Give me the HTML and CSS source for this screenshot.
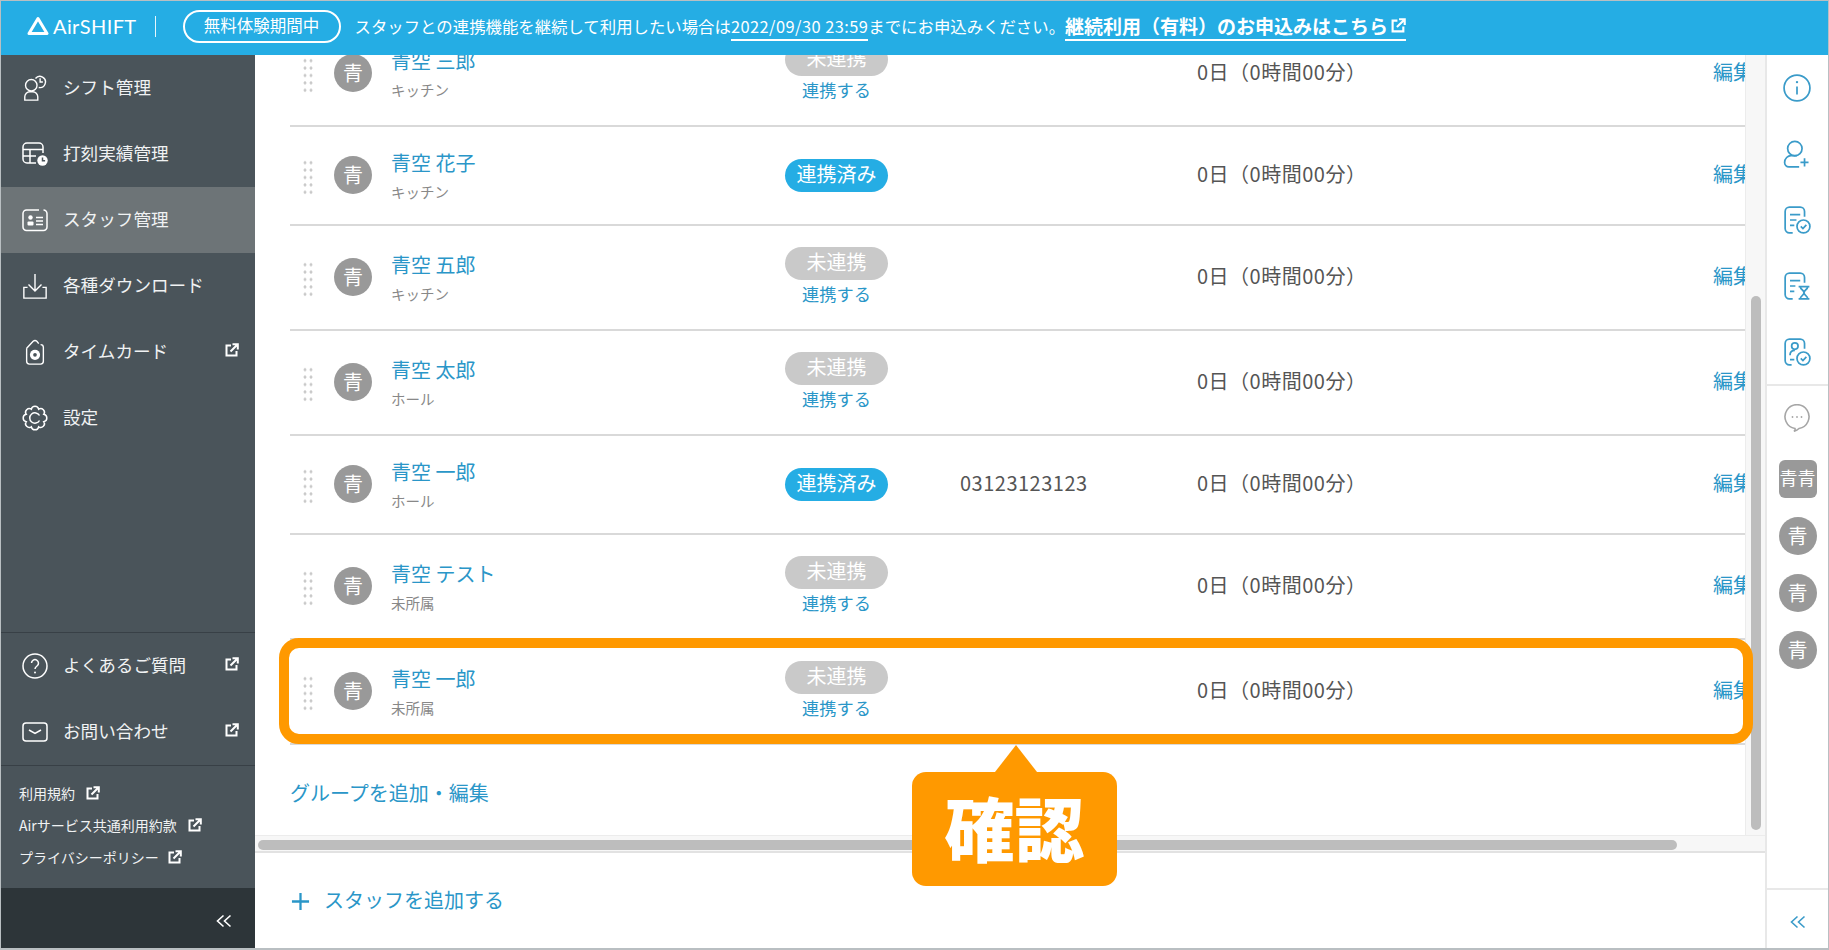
FILE: index.html
```html
<!DOCTYPE html>
<html lang="ja">
<head>
  <meta charset="UTF-8">
  <title>AirSHIFT スタッフ管理</title>
  <link rel="stylesheet" href="styles.css">
</head>
<body>
  <svg class="sprite" width="0" height="0">
    <symbol id="ext" viewBox="0 0 14 14">
      <path d="M6 2.5H1.5v10h10V8" fill="none" stroke="currentColor" stroke-width="2"/>
      <path d="M5.5 8.5L12 2M7.5 1.2h5.3v5.3" fill="none" stroke="currentColor" stroke-width="2"/>
    </symbol>
  </svg>

  <div class="frame">
    <header class="topbar">
      <div class="logo">
        <svg class="logo-mark" viewBox="0 0 22 20"><path d="M11 2.5L20 17.5H2Z" fill="none" stroke="#fff" stroke-width="3" stroke-linejoin="round"/></svg>
        <span class="logo-text">AirSHIFT</span>
      </div>
      <span class="topbar-sep"></span>
      <span class="trial-pill">無料体験期間中</span>
      <span class="notice">スタッフとの連携機能を継続して利用したい場合は<span class="notice-date">2022/09/30 23:59</span>までにお申込みください。</span>
      <a class="notice-link">継続利用（有料）のお申込みはこちら<svg class="ext-lg"><use href="#ext"/></svg></a>
    </header>

    <div class="body">
      <!-- 左メニュー -->
      <aside class="sidebar">
        <a class="nav-item">
          <svg class="nav-icon" viewBox="0 0 26 28"><circle cx="9" cy="11" r="6.2"/><path d="M2 27v-3.5a5.5 5.5 0 0 1 5.5-5.5h3a5.5 5.5 0 0 1 5.5 5.5V27Z"/><path d="M13.5 3.8a6 6 0 1 1 3.5 9.6M18.5 3.5v4h3"/></svg>
          <span>シフト管理</span>
        </a>
        <a class="nav-item">
          <svg class="nav-icon" viewBox="0 0 26 24"><path d="M14 21H5a4 4 0 0 1-4-4V5a4 4 0 0 1 4-4h12a4 4 0 0 1 4 4v6M1 7.5h20M1 14h13M8 7.5V21"/><circle cx="20.5" cy="18.5" r="5.2" fill="#fff" stroke="none"/><path d="M20.5 15.5v3.2h2.6" stroke="#4a545a"/></svg>
          <span>打刻実績管理</span>
        </a>
        <a class="nav-item active">
          <svg class="nav-icon" viewBox="0 0 26 24"><path d="M17 2H4.5A3.5 3.5 0 0 0 1 5.5V19a3.5 3.5 0 0 0 3.5 3.5h17A3.5 3.5 0 0 0 25 19V5.5A3.5 3.5 0 0 0 21.5 2"/><path d="M14 9.5h7M14 13h7M14 16.5h7"/><circle cx="8.5" cy="9.5" r="2.2" fill="#fff" stroke="none"/><rect x="5.5" y="13.5" width="6" height="4" rx="1" fill="#fff" stroke="none"/></svg>
          <span>スタッフ管理</span>
        </a>
        <a class="nav-item">
          <svg class="nav-icon" viewBox="0 0 26 28"><path d="M13 1v18M6 12.5l7 7 7-7M5 15.5H1v11.500h24V15.5h-4"/></svg>
          <span>各種ダウンロード</span>
        </a>
        <a class="nav-item">
          <svg class="nav-icon" viewBox="0 0 26 28"><path d="M4 10L11 2.5a3 3 0 0 1 4 0l2 2.5M4 10v14a3 3 0 0 0 3 3h12a3 3 0 0 0 3-3V9a3 3 0 0 0-3-3"/><circle cx="13" cy="17" r="5.5" fill="#fff" stroke="none"/><circle cx="13" cy="17" r="2" fill="#4a545a" stroke="none"/></svg>
          <span>タイムカード</span>
          <svg class="ext"><use href="#ext"/></svg>
        </a>
        <a class="nav-item">
          <svg class="nav-icon" viewBox="0 0 26 26"><path d="M21.78 9.36A3.7 3.7 0 0 1 21.78 16.64A3.7 3.7 0 0 1 16.64 21.78A3.7 3.7 0 0 1 9.36 21.78A3.7 3.7 0 0 1 4.22 16.64A3.7 3.7 0 0 1 4.22 9.36A3.7 3.7 0 0 1 9.36 4.22A3.7 3.7 0 0 1 16.64 4.22A3.7 3.7 0 0 1 21.78 9.36Z"/><path d="M17.5 10.5a5.2 5.2 0 1 0 0 5"/></svg>
          <span>設定</span>
        </a>

        <div class="sidebar-spacer"></div>

        <div class="sidebar-help">
          <a class="nav-item">
            <svg class="nav-icon" viewBox="0 0 26 26"><circle cx="13" cy="13" r="12"/><path d="M9.5 10a3.5 3.5 0 1 1 5.5 3c-1.3.9-2 1.6-2 3"/><circle cx="13" cy="19.5" r="1" fill="#fff" stroke="none"/></svg>
            <span>よくあるご質問</span>
            <svg class="ext"><use href="#ext"/></svg>
          </a>
          <a class="nav-item">
            <svg class="nav-icon" viewBox="0 0 26 20"><rect x="1" y="1" width="24" height="18" rx="3"/><path d="M7 8l6 3.5 6-3.5"/></svg>
            <span>お問い合わせ</span>
            <svg class="ext"><use href="#ext"/></svg>
          </a>
        </div>

        <div class="sidebar-links">
          <a class="small-link">利用規約<svg class="ext"><use href="#ext"/></svg></a>
          <a class="small-link">Airサービス共通利用約款<svg class="ext"><use href="#ext"/></svg></a>
          <a class="small-link tight">プライバシーポリシー<svg class="ext"><use href="#ext"/></svg></a>
        </div>

        <div class="sidebar-collapse">
          <svg class="chevrons" viewBox="0 0 16 14"><path d="M7.5 1.5L1.5 7l6 5.5M14.5 1.5L8.5 7l6 5.5"/></svg>
        </div>
      </aside>

      <!-- スタッフ一覧 -->
      <main class="main">
        <div class="scroll-area">
          <div class="content">
            <div class="staff-list">
              <div class="staff-row">
                <span class="handle"></span><span class="avatar">青</span>
                <div class="staff-name"><a class="name-link">青空 三郎</a><span class="group">キッチン</span></div>
                <div class="status"><span class="badge off">未連携</span><a class="connect">連携する</a></div>
                <div class="phone"></div><div class="worktime">0日（0時間00分）</div><a class="edit">編集</a>
              </div>
              <div class="staff-row">
                <span class="handle"></span><span class="avatar">青</span>
                <div class="staff-name"><a class="name-link">青空 花子</a><span class="group">キッチン</span></div>
                <div class="status"><span class="badge on">連携済み</span></div>
                <div class="phone"></div><div class="worktime">0日（0時間00分）</div><a class="edit">編集</a>
              </div>
              <div class="staff-row">
                <span class="handle"></span><span class="avatar">青</span>
                <div class="staff-name"><a class="name-link">青空 五郎</a><span class="group">キッチン</span></div>
                <div class="status"><span class="badge off">未連携</span><a class="connect">連携する</a></div>
                <div class="phone"></div><div class="worktime">0日（0時間00分）</div><a class="edit">編集</a>
              </div>
              <div class="staff-row">
                <span class="handle"></span><span class="avatar">青</span>
                <div class="staff-name"><a class="name-link">青空 太郎</a><span class="group">ホール</span></div>
                <div class="status"><span class="badge off">未連携</span><a class="connect">連携する</a></div>
                <div class="phone"></div><div class="worktime">0日（0時間00分）</div><a class="edit">編集</a>
              </div>
              <div class="staff-row">
                <span class="handle"></span><span class="avatar">青</span>
                <div class="staff-name"><a class="name-link">青空 一郎</a><span class="group">ホール</span></div>
                <div class="status"><span class="badge on">連携済み</span></div>
                <div class="phone">03123123123</div><div class="worktime">0日（0時間00分）</div><a class="edit">編集</a>
              </div>
              <div class="staff-row">
                <span class="handle"></span><span class="avatar">青</span>
                <div class="staff-name"><a class="name-link">青空 テスト</a><span class="group">未所属</span></div>
                <div class="status"><span class="badge off">未連携</span><a class="connect">連携する</a></div>
                <div class="phone"></div><div class="worktime">0日（0時間00分）</div><a class="edit">編集</a>
              </div>
              <div class="staff-row">
                <span class="handle"></span><span class="avatar">青</span>
                <div class="staff-name"><a class="name-link">青空 一郎</a><span class="group">未所属</span></div>
                <div class="status"><span class="badge off">未連携</span><a class="connect">連携する</a></div>
                <div class="phone"></div><div class="worktime">0日（0時間00分）</div><a class="edit">編集</a>
              </div>
            </div>
            <a class="group-link">グループを追加・編集</a>
          </div>
          <div class="v-track"><div class="v-thumb"></div></div>
        </div>
        <div class="h-track"><div class="h-thumb"></div></div>
        <div class="main-footer">
          <a class="add-staff">
            <svg class="plus" viewBox="0 0 20 20"><path d="M10 1v18M1 10h18"/></svg>
            スタッフを追加する
          </a>
        </div>
      </main>

      <!-- 右パネル -->
      <aside class="rightbar">
        <div class="tools">
          <a class="tool"><svg viewBox="0 0 26 26"><circle cx="13" cy="13" r="12"/><path d="M13 11.5v7.5"/><circle cx="13" cy="7.5" r="1.1" fill="currentColor" stroke="none"/></svg></a>
          <a class="tool"><svg viewBox="0 0 26 26"><circle cx="11" cy="8" r="6.7"/><path d="M15 25H5.5A4 4 0 0 1 1.5 21c0-4 3-6.5 6-6.5h5.5M20 17v7.5M16.2 20.7h7.5"/></svg></a>
          <a class="tool"><svg viewBox="0 0 26 26"><path d="M9 25H6a4 4 0 0 1-4-4V5a4 4 0 0 1 4-4h10a4 4 0 0 1 4 4v5M6.5 8h9.5M6.5 13h6M6.5 18h4"/><circle cx="19" cy="19" r="6"/><path d="M16.5 19l2 2 3.2-3.5"/></svg></a>
          <a class="tool"><svg viewBox="0 0 26 26"><path d="M9 25H6a4 4 0 0 1-4-4V5a4 4 0 0 1 4-4h10a4 4 0 0 1 4 4v5M6.5 8h9.5M6.5 13h5M6.5 18h4"/><path d="M14.5 13.5h10M14.5 25h10M16 13.5c0 3 3.5 3 3.5 5.7s-3.5 2.8-3.5 5.8M23 13.5c0 3-3.5 3-3.5 5.7s3.5 2.8 3.5 5.8"/></svg></a>
          <a class="tool"><svg viewBox="0 0 26 26"><path d="M8 25H6a4 4 0 0 1-4-4V5a4 4 0 0 1 4-4h10a4 4 0 0 1 4 4v5"/><circle cx="11" cy="7.5" r="3"/><path d="M6.5 16c0-3 2-4.5 4.5-4.5M6.5 20h4"/><circle cx="19" cy="19" r="6"/><path d="M16.5 19l2 2 3.2-3.5"/></svg></a>
        </div>
        <div class="members">
          <a class="tool chat"><svg viewBox="0 0 26 28"><path d="M15 24.5c-1 1-3 2.2-5 2.8 1-1 1.3-2 1-2.8A12 12 0 1 1 15 24.5Z"/><circle cx="8.5" cy="13" r=".9" fill="currentColor" stroke="none"/><circle cx="13" cy="13" r=".9" fill="currentColor" stroke="none"/><circle cx="17.5" cy="13" r=".9" fill="currentColor" stroke="none"/></svg></a>
          <span class="member square">青青</span>
          <span class="member">青</span>
          <span class="member">青</span>
          <span class="member">青</span>
        </div>
        <div class="right-collapse">
          <svg class="chevrons" viewBox="0 0 16 14"><path d="M7.5 1.5L1.5 7l6 5.5M14.5 1.5L8.5 7l6 5.5"/></svg>
        </div>
      </aside>
    </div>

    <!-- 注釈 -->
    <div class="highlight"></div>
    <div class="callout">確認</div>
  </div>
</body>
</html>
```

FILE: styles.css
```css
:root {
  --blue: #25ade4;
  --link: #2a96c8;
  --orange: #ff9900;
  --side: #4a545a;
  --line: #d9d9d9;
}

* {
  margin: 0;
  padding: 0;
  box-sizing: border-box;
}

html, body {
  height: 100%;
  overflow: hidden;
}

body {
  font-family: "Noto Sans CJK JP", "Noto Sans", sans-serif;
  background: #fff;
  color: #555;
}

.sprite {
  position: absolute;
}

.frame {
  position: relative;
  width: 1829px;
  height: 950px;
  border: 1px solid #b9bfc2;
  border-bottom-width: 2px;
  display: flex;
  flex-direction: column;
}

/* top bar */
.topbar {
  height: 54px;
  flex: none;
  background: var(--blue);
  color: #fff;
  display: flex;
  align-items: center;
  padding: 0 0 4px 26px;
  white-space: nowrap;
}

.logo {
  display: flex;
  align-items: center;
  gap: 4px;
}

.logo-mark {
  width: 22px;
  height: 20px;
}

.logo-text {
  font-family: Lato, sans-serif;
  font-size: 20px;
  letter-spacing: .4px;
}

.topbar-sep {
  width: 1px;
  height: 21px;
  background: #e6f6fc;
  margin: 0 27px 0 18px;
}

.trial-pill {
  width: 158px;
  height: 33px;
  border: 2px solid #fff;
  border-radius: 17px;
  font-size: 16.5px;
  line-height: 27px;
  text-align: center;
  margin-right: 14px;
}

.notice {
  font-size: 16.4px;
  line-height: 24px;
  margin-bottom: 1px;
}

.notice-date {
  border-bottom: 2px solid #fff;
  padding-bottom: 1px;
  letter-spacing: .45px;
}

.notice-link {
  font-size: 19px;
  font-weight: 700;
  border-bottom: 2px solid #fff;
  display: flex;
  align-items: center;
  height: 30px;
}

.ext-lg {
  width: 15px;
  height: 15px;
  margin-left: 3px;
}

.body {
  flex: 1;
  display: flex;
  min-height: 0;
}

/* sidebar */
.sidebar {
  width: 254px;
  flex: none;
  background: var(--side);
  color: #f0f2f3;
  display: flex;
  flex-direction: column;
}

.nav-item {
  height: 66px;
  flex: none;
  display: flex;
  align-items: center;
  font-size: 17.6px;
  padding: 0 0 4px 62px;
  position: relative;
}

.nav-item.active {
  background: #6d7477;
}

.nav-icon {
  position: absolute;
  left: 21px;
  top: 50%;
  transform: translateY(-50%);
  width: 26px;
  height: 26px;
  fill: none;
  stroke: #fff;
  stroke-width: 1.5;
}

.nav-item .ext {
  margin-left: auto;
  margin-right: 16px;
}

.ext {
  width: 14px;
  height: 14px;
  color: #fff;
  flex: none;
}

.sidebar-spacer {
  flex: 1;
}

.sidebar-help {
  border-top: 1px solid #384046;
  border-bottom: 1px solid #384046;
}

.sidebar-links {
  height: 122px;
  padding-top: 11px;
  flex: none;
}

.small-link {
  display: flex;
  align-items: center;
  gap: 11px;
  height: 32px;
  padding-left: 18px;
  font-size: 14px;
}

.small-link.tight {
  gap: 9px;
}

.sidebar-collapse {
  height: 60px;
  flex: none;
  background: #2d3539;
  display: flex;
  align-items: center;
  justify-content: flex-end;
  padding: 6px 23px 0 0;
}

.chevrons {
  width: 16px;
  height: 14px;
  fill: none;
  stroke: #fff;
  stroke-width: 1.6;
}

/* main */
.main {
  flex: 1;
  min-width: 0;
  display: flex;
  flex-direction: column;
}

.scroll-area {
  height: 780px;
  flex: none;
  display: flex;
}

.content {
  width: 1491px;
  flex: none;
  overflow: hidden;
  padding-left: 35px;
  border-right: 1px solid #ececec;
}

.staff-list {
  margin-top: -33px;
}

.staff-row {
  display: grid;
  grid-template-columns: 43px 38px 414px 103px 309px 516px 33px;
  align-items: center;
  padding: 21px 0;
  border-bottom: 2px solid var(--line);
}

.handle {
  width: 12px;
  height: 37px;
  margin: 4px 0 0 12px;
  background: radial-gradient(circle, #c9c9c9 1.3px, transparent 1.7px) 0 0 / 6px 7.4px;
}

.avatar {
  width: 38px;
  height: 38px;
  margin: -2px 0 0 1px;
  border-radius: 50%;
  background: #999;
  color: #fff;
  font-size: 20px;
  line-height: 37px;
  text-align: center;
}

.staff-name {
  padding-left: 20px;
  height: 55px;
  display: flex;
  flex-direction: column;
}

.name-link {
  color: var(--link);
  font-size: 20px;
  line-height: 28px;
  margin-top: 1px;
}

.group {
  color: #888;
  font-size: 14.5px;
  line-height: 22px;
  margin-top: 4px;
}

.status {
  display: flex;
  flex-direction: column;
  align-items: center;
}

.badge {
  width: 103px;
  height: 33px;
  border-radius: 17px;
  color: #fff;
  font-size: 20px;
  line-height: 30px;
  text-align: center;
}

.badge.on {
  background: var(--blue);
}

.badge.off {
  background: #c9c9c9;
}

.connect {
  color: var(--link);
  font-size: 17.2px;
  line-height: 24px;
  margin: 2px 0;
}

.phone {
  padding: 0 0 4px 72px;
  font-size: 20px;
  color: #555;
  letter-spacing: .5px;
}

.worktime {
  font-size: 20px;
  color: #555;
  letter-spacing: .5px;
  padding-bottom: 4px;
}

.edit {
  color: var(--link);
  font-size: 20px;
  overflow: hidden;
  white-space: nowrap;
  padding-bottom: 4px;
}

.group-link {
  display: block;
  color: var(--link);
  font-size: 20px;
  line-height: 28px;
  margin-top: 34px;
}

.v-track {
  flex: 1;
  background: #f7f7f7;
}

.v-thumb {
  width: 10px;
  height: 534px;
  margin: 241px 0 0 5px;
  background: #bdbdbd;
  border-radius: 5px;
}

.h-track {
  height: 18px;
  flex: none;
  background: #f7f7f7;
  border-top: 1px solid #ececec;
  border-bottom: 2px solid #e2e2e2;
  padding: 4px 0 0 3px;
}

.h-thumb {
  width: 1419px;
  height: 10px;
  background: #bdbdbd;
  border-radius: 5px;
}

.main-footer {
  flex: 1;
  display: flex;
  align-items: center;
  padding: 0 0 2px 36px;
}

.add-staff {
  display: flex;
  align-items: center;
  gap: 14px;
  color: var(--link);
  font-size: 20px;
}

.plus {
  width: 19px;
  height: 19px;
  margin-top: 4px;
  fill: none;
  stroke: var(--link);
  stroke-width: 2.4;
}

/* right panel */
.rightbar {
  width: 63px;
  flex: none;
  border-left: 2px solid #e8e8e8;
  display: flex;
  flex-direction: column;
}

.tools {
  height: 331px;
  flex: none;
  padding-right: 2px;
  border-bottom: 2px solid #e8e8e8;
}

.tool {
  height: 66px;
  display: flex;
  align-items: center;
  justify-content: center;
  color: #3a9bc9;
}

.tool svg {
  width: 28px;
  height: 28px;
  fill: none;
  stroke: currentColor;
  stroke-width: 1.6;
}

.members {
  flex: 1;
  display: flex;
  flex-direction: column;
  align-items: center;
  gap: 19px;
}

.tool.chat {
  height: 62px;
  padding: 2px 2px 0 0;
  margin-bottom: -7px;
  color: #a6a6a6;
}

.member {
  width: 38px;
  height: 38px;
  border-radius: 50%;
  background: #999;
  color: #fff;
  font-size: 20px;
  line-height: 37px;
  text-align: center;
}

.member.square {
  border-radius: 6px;
  font-size: 18px;
  line-height: 34px;
  white-space: nowrap;
}

.right-collapse {
  height: 60px;
  flex: none;
  border-top: 2px solid #e8e8e8;
  display: flex;
  align-items: center;
  justify-content: center;
  padding-top: 5px;
}

.right-collapse .chevrons {
  stroke: #3a9bc9;
}

/* annotation */
.highlight {
  position: absolute;
  left: 278px;
  top: 637px;
  width: 1474px;
  height: 106px;
  border: 10px solid var(--orange);
  border-radius: 20px;
}

.callout {
  position: absolute;
  left: 911px;
  top: 771px;
  width: 205px;
  height: 114px;
  background: var(--orange);
  border-radius: 14px;
  color: #fff;
  font-size: 70px;
  font-weight: 900;
  line-height: 110px;
  text-align: center;
}

.callout::before {
  content: "";
  position: absolute;
  left: 83px;
  top: -27px;
  border-left: 21px solid transparent;
  border-right: 21px solid transparent;
  border-bottom: 27px solid var(--orange);
}
```
